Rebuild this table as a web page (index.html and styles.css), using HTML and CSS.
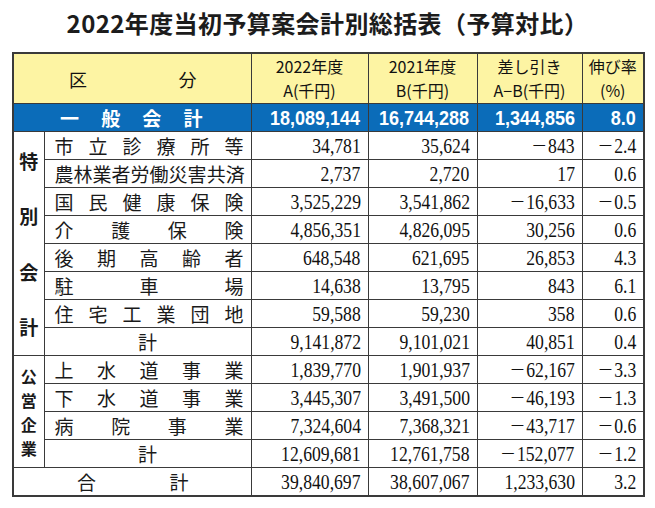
FILE: index.html
```html
<!DOCTYPE html>
<html lang="ja">
<head>
<meta charset="utf-8">
<title>2022年度当初予算案会計別総括表</title>
<link rel="stylesheet" href="styles.css">
</head>
<body>
<h1 class="title">2022年度当初予算案会計別総括表（予算対比）</h1>
<table class="budget">
  <colgroup>
    <col class="c-cat"><col class="c-name"><col class="c-a"><col class="c-b"><col class="c-diff"><col class="c-rate">
  </colgroup>
  <thead>
    <tr class="head">
      <th colspan="2"><div class="kubun"><span>区</span><span>分</span></div></th>
      <th><span class="hl">2022年度</span><span class="hl">A(千円)</span></th>
      <th><span class="hl">2021年度</span><span class="hl">B(千円)</span></th>
      <th><span class="hl">差し引き</span><span class="hl">A−B(千円)</span></th>
      <th><span class="hl">伸び率</span><span class="hl">(%)</span></th>
    </tr>
  </thead>
  <tbody>
    <tr class="general">
      <td colspan="2"><div class="spread gen"><span>一</span><span>般</span><span>会</span><span>計</span></div></td>
      <td class="num"><span>18,089,144</span></td>
      <td class="num"><span>16,744,288</span></td>
      <td class="num"><span>1,344,856</span></td>
      <td class="num"><span>8.0</span></td>
    </tr>
    <tr>
      <td rowspan="8" class="cat"><div class="cat-spread"><span>特</span><span>別</span><span>会</span><span>計</span></div></td>
      <td><div class="spread"><span>市</span><span>立</span><span>診</span><span>療</span><span>所</span><span>等</span></div></td>
      <td class="num"><span>34,781</span></td><td class="num"><span>35,624</span></td><td class="num"><span><i class="minus">－</i>843</span></td><td class="num"><span><i class="minus">－</i>2.4</span></td>
    </tr>
    <tr>
      <td><div class="spread"><span>農</span><span>林</span><span>業</span><span>者</span><span>労</span><span>働</span><span>災</span><span>害</span><span>共</span><span>済</span></div></td>
      <td class="num"><span>2,737</span></td><td class="num"><span>2,720</span></td><td class="num"><span>17</span></td><td class="num"><span>0.6</span></td>
    </tr>
    <tr>
      <td><div class="spread"><span>国</span><span>民</span><span>健</span><span>康</span><span>保</span><span>険</span></div></td>
      <td class="num"><span>3,525,229</span></td><td class="num"><span>3,541,862</span></td><td class="num"><span><i class="minus">－</i>16,633</span></td><td class="num"><span><i class="minus">－</i>0.5</span></td>
    </tr>
    <tr>
      <td><div class="spread"><span>介</span><span>護</span><span>保</span><span>険</span></div></td>
      <td class="num"><span>4,856,351</span></td><td class="num"><span>4,826,095</span></td><td class="num"><span>30,256</span></td><td class="num"><span>0.6</span></td>
    </tr>
    <tr>
      <td><div class="spread"><span>後</span><span>期</span><span>高</span><span>齢</span><span>者</span></div></td>
      <td class="num"><span>648,548</span></td><td class="num"><span>621,695</span></td><td class="num"><span>26,853</span></td><td class="num"><span>4.3</span></td>
    </tr>
    <tr>
      <td><div class="spread"><span>駐</span><span>車</span><span>場</span></div></td>
      <td class="num"><span>14,638</span></td><td class="num"><span>13,795</span></td><td class="num"><span>843</span></td><td class="num"><span>6.1</span></td>
    </tr>
    <tr>
      <td><div class="spread"><span>住</span><span>宅</span><span>工</span><span>業</span><span>団</span><span>地</span></div></td>
      <td class="num"><span>59,588</span></td><td class="num"><span>59,230</span></td><td class="num"><span>358</span></td><td class="num"><span>0.6</span></td>
    </tr>
    <tr>
      <td class="sub">計</td>
      <td class="num"><span>9,141,872</span></td><td class="num"><span>9,101,021</span></td><td class="num"><span>40,851</span></td><td class="num"><span>0.4</span></td>
    </tr>
    <tr>
      <td rowspan="4" class="cat"><div class="cat-stack"><span>公</span><span>営</span><span>企</span><span>業</span></div></td>
      <td><div class="spread"><span>上</span><span>水</span><span>道</span><span>事</span><span>業</span></div></td>
      <td class="num"><span>1,839,770</span></td><td class="num"><span>1,901,937</span></td><td class="num"><span><i class="minus">－</i>62,167</span></td><td class="num"><span><i class="minus">－</i>3.3</span></td>
    </tr>
    <tr>
      <td><div class="spread"><span>下</span><span>水</span><span>道</span><span>事</span><span>業</span></div></td>
      <td class="num"><span>3,445,307</span></td><td class="num"><span>3,491,500</span></td><td class="num"><span><i class="minus">－</i>46,193</span></td><td class="num"><span><i class="minus">－</i>1.3</span></td>
    </tr>
    <tr>
      <td><div class="spread"><span>病</span><span>院</span><span>事</span><span>業</span></div></td>
      <td class="num"><span>7,324,604</span></td><td class="num"><span>7,368,321</span></td><td class="num"><span><i class="minus">－</i>43,717</span></td><td class="num"><span><i class="minus">－</i>0.6</span></td>
    </tr>
    <tr>
      <td class="sub">計</td>
      <td class="num"><span>12,609,681</span></td><td class="num"><span>12,761,758</span></td><td class="num"><span><i class="minus">－</i>152,077</span></td><td class="num"><span><i class="minus">－</i>1.2</span></td>
    </tr>
    <tr>
      <td colspan="2"><div class="spread total"><span>合</span><span>計</span></div></td>
      <td class="num"><span>39,840,697</span></td><td class="num"><span>38,607,067</span></td><td class="num"><span>1,233,630</span></td><td class="num"><span>3.2</span></td>
    </tr>
  </tbody>
</table>
</body>
</html>
```
FILE: styles.css
```css
html, body {
  margin: 0;
  padding: 0;
  background: #ffffff;
}
body {
  font-family: "Noto Sans CJK JP", "Noto Sans", sans-serif;
  color: #1a1a1a;
}
.title {
  margin: 0;
  height: 52px;
  box-sizing: border-box;
  padding-top: 8px;
  font-size: 24px;
  line-height: 30px;
  font-weight: 700;
  text-align: center;
  width: 655px;
  letter-spacing: 0.4px;
  color: #1c1c1c;
}
.budget {
  margin-left: 12px;
  width: 631px;
  table-layout: fixed;
  border-collapse: collapse;
  border: 2px solid #3a3a3a;
}
.c-cat { width: 31px; }
.c-name { width: 207px; }
.c-a { width: 117px; }
.c-b { width: 109px; }
.c-diff { width: 105px; }
.c-rate { width: 62px; }

.budget th, .budget td {
  border: 1px solid #3a3a3a;
  padding: 0;
}
.head th {
  background: #fdf4a3;
  height: 49px;
  font-size: 16px;
  line-height: 23.5px;
  font-weight: 400;
  color: #111111;
  text-align: center;
  vertical-align: middle;
}
.hl {
  display: block;
}
.kubun {
  display: flex;
  justify-content: space-between;
  padding: 0 54px 0 55px;
  font-size: 18px;
  line-height: 26px;
}
.budget tbody tr {
  height: 27px;
}
.budget tbody td {
  height: 27px;
  vertical-align: middle;
}
.general td {
  background: #0b6cb9;
  color: #ffffff;
}
.spread {
  display: flex;
  justify-content: space-between;
  padding: 0 7px 0 10px;
  font-size: 19px;
  line-height: 26px;
  color: #1a1a1a;
}
.spread.gen {
  padding: 0 48px 0 46px;
  font-weight: 700;
  color: #ffffff;
  font-size: 19px;
}
.spread.total {
  padding: 0 62px 0 63px;
}
.sub {
  text-align: center;
  font-size: 19px;
  line-height: 26px;
}
.cat {
  vertical-align: middle;
  text-align: center;
  font-weight: 700;
  font-size: 19px;
  color: #1a1a1a;
}
.cat-spread {
  display: flex;
  flex-direction: column;
  justify-content: space-around;
  align-items: center;
  height: 222px;
}
.cat-stack {
  display: flex;
  flex-direction: column;
  align-items: center;
  font-size: 16px;
  line-height: normal;
}
.num {
  text-align: right;
  padding-right: 7px !important;
  font-family: "Liberation Serif", "DejaVu Serif", serif;
  font-size: 21px;
  line-height: 26px;
  color: #111111;
  white-space: nowrap;
}
.num span {
  display: inline-block;
  transform: scaleX(0.84);
  transform-origin: right center;
}
.minus {
  font-style: normal;
  font-family: "Noto Sans CJK JP", sans-serif;
  font-weight: 300;
  font-size: 19px;
  margin-right: 1px;
}
.general .num {
  font-family: "Liberation Sans", Arial, sans-serif;
  font-weight: 700;
  font-size: 20px;
  color: #ffffff;
}
.general .num span {
  transform: scaleX(0.9);
}
```
